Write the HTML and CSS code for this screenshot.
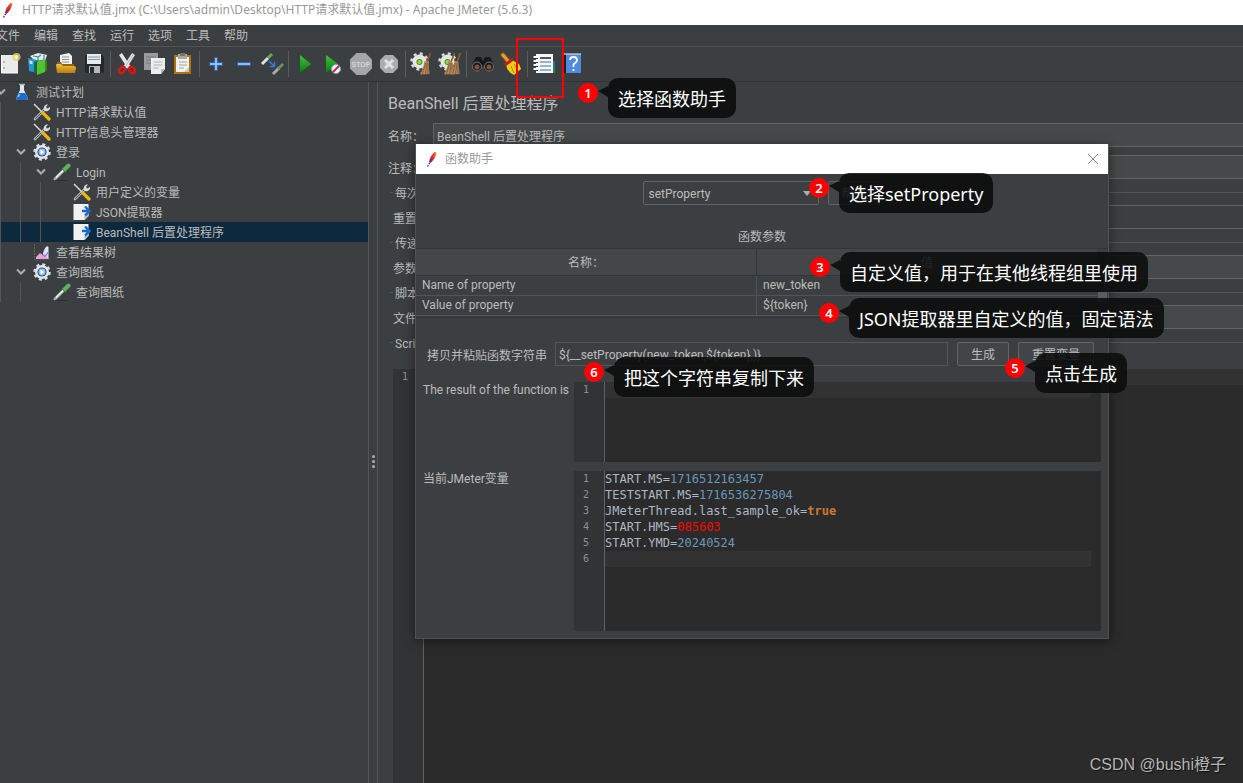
FILE: index.html
```html
<!DOCTYPE html>
<html lang="zh-CN">
<head>
<meta charset="utf-8">
<title>Apache JMeter (5.6.3)</title>
<link rel="stylesheet" href="styles.css">
</head>
<body>
<svg class="defs" aria-hidden="true">
  <defs>
    <linearGradient id="gFeather" x1="0" y1="1" x2="1" y2="0"><stop offset="0" stop-color="#5b2a86"/><stop offset=".45" stop-color="#d0213a"/><stop offset="1" stop-color="#f08a1d"/></linearGradient>
    <linearGradient id="gGreen" x1="0" y1="0" x2="0" y2="1"><stop offset="0" stop-color="#3fc43a"/><stop offset="1" stop-color="#0a7a0a"/></linearGradient>
    <linearGradient id="gFolder" x1="0" y1="0" x2="0" y2="1"><stop offset="0" stop-color="#f0c040"/><stop offset="1" stop-color="#b97d08"/></linearGradient>
    <symbol id="feather" viewBox="0 0 16 18">
      <path d="M5 12C5.500 9 7.500 4.500 10.500 2l2 .5C12 6 9.500 10.500 6.500 13z" fill="url(#gFeather)"/>
      <path d="M3.500 16.500l3-5" stroke="#5b2a86" stroke-width="1.400" stroke-dasharray="1.500 1.200"/>
    </symbol>
    <symbol id="tools" viewBox="0 0 18 18">
      <path d="M2 16L12 6" stroke="#aeb0b2" stroke-width="2.800" stroke-linecap="round"/>
      <path d="M2.200 15.800L12 6" stroke="#50565a" stroke-width="1"/>
      <path d="M11 7c-1-3 1-6 4-5.500L13 4l1 1.500 3-1.500c.5 3-2.500 5-5 4z" fill="#d6d8da"/>
      <path d="M1 1l9 9" stroke="#d6d8da" stroke-width="1.500"/>
      <path d="M10 10l6 6" stroke="#efb413" stroke-width="3.200" stroke-linecap="round"/>
    </symbol>
    <symbol id="gear" viewBox="0 0 18 18">
      <circle cx="9" cy="9" r="7.500" fill="none" stroke="#d9dde2" stroke-width="2.500" stroke-dasharray="3 2.890"/>
      <circle cx="9" cy="9" r="7" fill="#e3e7ec"/>
      <circle cx="9" cy="9" r="4.600" fill="#315b93"/>
      <circle cx="9" cy="9" r="3.400" fill="#9bbbe0"/>
      <path d="M7.500 6.500l4 2.500-4 2.500z" fill="#fff"/>
    </symbol>
    <symbol id="pipette" viewBox="0 0 18 18">
      <path d="M2 16L11 7" stroke="#a9adaf" stroke-width="3" stroke-linecap="round"/>
      <path d="M3 14.500L10.500 7" stroke="#f4f4f4" stroke-width="1.300"/>
      <path d="M9 5l4 4" stroke="#3f7d3f" stroke-width="2"/>
      <path d="M12 6l3.500-3.500" stroke="#63ad5e" stroke-width="4" stroke-linecap="round"/>
      <path d="M2 17.500h13" stroke="#2d3031" stroke-width="1"/>
    </symbol>
    <symbol id="pageArrow" viewBox="0 0 18 18">
      <path d="M.5 1h15v12l-4 4H.5z" fill="#f0f1f1"/><path d="M15.500 10v3l-4 4v-4z" fill="#b7baba"/>
      <path d="M9 8h7M12 3.500L16.500 8 12 12.500" fill="none" stroke="#1769d2" stroke-width="2.400"/>
    </symbol>
    <symbol id="flask" viewBox="0 0 18 18">
      <path d="M7 2h4v5l4 8.500q.3 1.500-1.500 1.500h-9Q2.700 17 3 15.500L7 7z" fill="#dce8f3"/>
      <path d="M5.700 10h6.600l2.700 5.500q.3 1.500-1.500 1.500h-9Q2.700 17 3 15.500z" fill="#1c6fc9"/><path d="M6 1.500h6" stroke="#a8b6c2" stroke-width="1.500"/><path d="M5 14l1.500-3" stroke="#8fc1f2" stroke-width="1.500"/>
    </symbol>
    <symbol id="chart" viewBox="0 0 18 18">
      <path d="M1.500 1v16H17" fill="none" stroke="#5c6265" stroke-dasharray="2 1"/>
      <path d="M10 10q3-9 5.500-6V16h-6z" fill="#dfe6fa"/><path d="M3 16v-2l4-4 3 2 2-2 3 6z" fill="#ea9fd6"/><path d="M9.500 11q2 4 4 1l1.500-3" fill="none" stroke="#4b73c8"/>
    </symbol>
    <symbol id="chev" viewBox="0 0 10 8"><path d="M1 1.500l4 4 4-4" fill="none" stroke="#adadad" stroke-width="2"/></symbol>
    <symbol id="gearSmall" viewBox="0 0 24 24">
      <circle cx="9.500" cy="9.500" r="8" fill="none" stroke="#d8dad6" stroke-width="2.500" stroke-dasharray="3 3.280"/><circle cx="9.500" cy="9.500" r="7" fill="#e6e7e3"/><circle cx="9.500" cy="10" r="3" fill="#4f8f25"/><circle cx="9.500" cy="10" r="2" fill="#8ed64a"/>
    </symbol>
    <symbol id="besom" viewBox="0 0 24 24">
      <path d="M20.500 1L17 10" stroke="#8b5e30" stroke-width="1.600"/><path d="M14.500 9l4 1 1 12-9 .5q-1-1 1-3 2-4 3-10.500z" fill="#b58a5c"/>
      <path d="M15.500 11l-3 11M17 11l-1.500 11M18 11v11" stroke="#7d5630" stroke-width=".8"/>
    </symbol>
  </defs>
</svg>

<div class="app">
  <header class="titlebar">
    <svg class="feather"><use href="#feather"/></svg>
    <span>HTTP请求默认值.jmx (C:\Users\admin\Desktop\HTTP请求默认值.jmx) - Apache JMeter (5.6.3)</span>
  </header>

  <nav class="menubar">
    <button>文件</button><button>编辑</button><button>查找</button><button>运行</button><button>选项</button><button>工具</button><button>帮助</button>
  </nav>

  <div class="toolbar">
    <button aria-label="新建"><svg viewBox="0 0 24 24"><path d="M3 3h17v18H3z" fill="#e9eaea"/><path d="M3.500 3v18H20" fill="none" stroke="#fff"/><path d="M6 9v2M6 15v2" stroke="#8a8d8f"/><circle cx="18.500" cy="5" r="4" fill="#e8d46a" opacity=".8"/><circle cx="18.500" cy="5" r="1.800" fill="#fffbd0"/></svg></button>
    <button aria-label="模板"><svg viewBox="0 0 24 24"><path d="M4 4l8-3 9 2-2 6-9 1z" fill="#dfeee8"/><path d="M7 4l5 1v4l6-1V3M12 5l3-2" fill="none" stroke="#3d8e85" stroke-width="1.200"/><path d="M2 6l9 2v13l-8-2z" fill="#2b93d0"/><path d="M3.500 8.500l3 .8v3l-3-.8z" fill="#c4e8fa"/><path d="M8 10l4-1.500V22l-4-2z" fill="#146b3c"/><path d="M11 10l8-2v12l-8 3z" fill="#54c22f"/><path d="M19 8l2 1v9l-2 2z" fill="#2e8b19"/></svg></button>
    <button aria-label="打开"><svg viewBox="0 0 24 24"><path d="M6 3l9-2 3 3v9H6z" fill="#f2f2f0"/><path d="M8 5h7M8 7.500h7M8 10h7" stroke="#909497"/><path d="M3 10h4l1 2h12l1 9H3z" fill="#96630a"/><path d="M2 13q0-1 1-1h4l2 2h11q2 0 2 2l-1 5H3z" fill="url(#gFolder)"/></svg></button>
    <button aria-label="保存"><svg viewBox="0 0 24 24"><path d="M3 3h17l2 2v16H4l-1-1z" fill="#23282c"/><path d="M5 2h14v10H5z" fill="#e5ebef"/><path d="M6 5h12M6 7.500h12" stroke="#7c9ab0"/><path d="M7 14h11v7H7z" fill="#b4b8bb"/><path d="M8 15h4v6H8z" fill="#282c30"/></svg></button>
    <span class="sep"></span>
    <button aria-label="剪切"><svg viewBox="0 0 24 24"><path d="M5.500 2l9 14M18.500 2l-9 14" stroke="#e6e6e6" stroke-width="3.500"/><path d="M18.500 2l-9 14" stroke="#b2b2b2" stroke-width="1"/><ellipse cx="7" cy="18" rx="2.500" ry="3.500" transform="rotate(35 7 18)" fill="none" stroke="#d91515" stroke-width="2.500"/><ellipse cx="17" cy="18" rx="2.500" ry="3.500" transform="rotate(-35 17 18)" fill="none" stroke="#d91515" stroke-width="2.500"/></svg></button>
    <button aria-label="复制"><svg viewBox="0 0 24 24"><path d="M1 1h14v17H1z" fill="#989b9c"/><path d="M3 5h10M3 8h6M3 11h5" stroke="#777b7d"/><path d="M8 6h14v11l-4 5H8z" fill="#eceded"/><path d="M18 22v-5h4z" fill="#b4b6b8"/><path d="M10.500 10h9M10.500 13h9M10.500 16h5" stroke="#aeb2b4"/></svg></button>
    <button aria-label="粘贴"><svg viewBox="0 0 24 24"><path d="M3 3h17v19H3z" fill="#ae7211"/><path d="M5 5h13v15H5z" fill="#f1f1ee"/><path d="M7 2h9v5H7z" fill="#a6a9a6"/><path d="M9 1h5v3H9z" fill="#72776b"/><path d="M8 10h8M8 13h8M8 16h5" stroke="#a1a5a7"/><path d="M18 15v5h-5z" fill="#c5c7c8"/></svg></button>
    <span class="sep"></span>
    <button aria-label="展开"><svg viewBox="0 0 24 24"><path d="M12 5v14M5 12h14" stroke="#2e62b4" stroke-width="4"/><path d="M12 6v12M6 12h12" stroke="#91bcf2" stroke-width="2"/></svg></button>
    <button aria-label="折叠"><svg viewBox="0 0 24 24"><path d="M5 12h14" stroke="#2e62b4" stroke-width="4"/><path d="M6 12h12" stroke="#91bcf2" stroke-width="2"/></svg></button>
    <button aria-label="切换"><svg viewBox="0 0 24 24"><path d="M2 12l6-6" stroke="#dfe2df" stroke-width="3"/><path d="M8 6l4-4" stroke="#64a75e" stroke-width="3"/><path d="M13 22l6-6" stroke="#a6aaa6" stroke-width="3"/><path d="M18 17l5-5" stroke="#6d8d68" stroke-width="3"/><path d="M9 9l5 5M14.500 10v4.500H10" fill="none" stroke="#2f7de0" stroke-width="1.500"/></svg></button>
    <span class="sep"></span>
    <button aria-label="启动"><svg viewBox="0 0 24 24"><path d="M7 3l11 9-11 9z" fill="url(#gGreen)"/></svg></button>
    <button aria-label="不停顿开始"><svg viewBox="0 0 24 24"><path d="M5 3l12 9-12 9z" fill="url(#gGreen)"/><circle cx="15" cy="17" r="4.500" fill="#e8eefa" stroke="#7ba0cf"/><path d="M12 20l6-6" stroke="#cf2626" stroke-width="2"/></svg></button>
    <button aria-label="停止"><svg viewBox="0 0 24 24"><path d="M7.500 1h9L23 7.500v9L16.500 23h-9L1 16.500v-9z" fill="#a5a6a7"/><text x="12" y="15" text-anchor="middle" class="stop">STOP</text></svg></button>
    <button aria-label="关闭"><svg viewBox="0 0 24 24"><path d="M8 3h8l5 5v8l-5 5H8l-5-5V8z" fill="#abacad"/><path d="M8 8l8 8M16 8l-8 8" stroke="#e2e2e2" stroke-width="3"/></svg></button>
    <span class="sep"></span>
    <button aria-label="清除"><svg viewBox="0 0 24 24"><use href="#gearSmall"/><use href="#besom"/></svg></button>
    <button aria-label="清除全部"><svg viewBox="0 0 24 24"><use href="#gearSmall"/><use href="#besom" x="-4"/><use href="#besom" x="2"/></svg></button>
    <span class="sep"></span>
    <button aria-label="搜索"><svg viewBox="0 0 24 24"><path d="M5 5h5l2 4 2-4h5l4 8-3 6h-5l-3-6-3 6H4l-3-6z" fill="#16191b"/><circle cx="6" cy="14.500" r="4.500" fill="#17191b" stroke="#777"/><circle cx="18" cy="14.500" r="4.500" fill="#17191b" stroke="#777"/><circle cx="6" cy="15" r="2.500" fill="#855239"/><circle cx="18" cy="15" r="2.500" fill="#855239"/></svg></button>
    <button aria-label="重置搜索"><svg viewBox="0 0 24 24"><path d="M4 3l5 6" stroke="#9a5210" stroke-width="5" stroke-linecap="round"/><path d="M4 3l5 6" stroke="#dda02d" stroke-width="3" stroke-linecap="round"/><path d="M13 8l7 4 2 5-7 6q-7-3-8-10z" fill="#f1ce16"/><path d="M12 14l3 7M15 12l4 7" stroke="#b28408"/><path d="M6 13l8-6" stroke="#c71d14" stroke-width="3"/></svg></button>
    <span class="sep"></span>
    <button aria-label="函数助手"><svg viewBox="0 0 24 24"><path d="M19 9h4v12h-4z" fill="#1b8f28"/><path d="M19 9h4v6h-4z" fill="#1670d0"/><path d="M4 2h17v19H4z" fill="#f7f7f7"/><path d="M8 6h11" stroke="#222" stroke-width="1.500"/><path d="M8 10h11M8 14h11M8 18h11" stroke="#3670a8" stroke-width="1.200"/><path d="M1.500 5h5M1.500 9h5M1.500 13h5M1.500 17h5" stroke="#fff" stroke-width="2"/><path d="M4 6.500h2M4 10.500h2M4 14.500h2M4 18.500h2" stroke="#333"/></svg></button>
    <button aria-label="帮助"><svg viewBox="0 0 24 24"><path d="M3 3h4v18H3z" fill="#1d2025"/><path d="M6 2h15v19H6z" fill="#4f8bdc"/><path d="M4 2h17" stroke="#eee"/><path d="M10 8q0-3 3.500-3T17 8q0 2-2 3t-1.500 4M13.500 17v2" fill="none" stroke="#fff" stroke-width="1.800"/></svg></button>
  </div>

  <main class="workspace">
    <ul class="tree">
      <li><i><svg class="chev"><use href="#chev"/></svg></i><svg class="ico"><use href="#flask"/></svg><span>测试计划</span></li>
      <li><i class="guide"></i><i></i><svg class="ico"><use href="#tools"/></svg><span>HTTP请求默认值</span></li>
      <li><i class="guide"></i><i></i><svg class="ico"><use href="#tools"/></svg><span>HTTP信息头管理器</span></li>
      <li><i class="guide"></i><i><svg class="chev"><use href="#chev"/></svg></i><svg class="ico"><use href="#gear"/></svg><span>登录</span></li>
      <li><i class="guide"></i><i class="guide"></i><i><svg class="chev"><use href="#chev"/></svg></i><svg class="ico"><use href="#pipette"/></svg><span>Login</span></li>
      <li><i class="guide"></i><i class="guide"></i><i class="guide"></i><i></i><svg class="ico"><use href="#tools"/></svg><span>用户定义的变量</span></li>
      <li><i class="guide"></i><i class="guide"></i><i class="guide"></i><i></i><svg class="ico"><use href="#pageArrow"/></svg><span>JSON提取器</span></li>
      <li class="selected"><i class="guide"></i><i class="guide"></i><i class="guide"></i><i></i><svg class="ico"><use href="#pageArrow"/></svg><span>BeanShell 后置处理程序</span></li>
      <li><i class="guide"></i><i></i><svg class="ico"><use href="#chart"/></svg><span>查看结果树</span></li>
      <li><i class="guide"></i><i><svg class="chev"><use href="#chev"/></svg></i><svg class="ico"><use href="#gear"/></svg><span>查询图纸</span></li>
      <li><i class="guide"></i><i class="guide"></i><i></i><svg class="ico"><use href="#pipette"/></svg><span>查询图纸</span></li>
    </ul>
    <div class="splitter"><b></b><b></b><b></b></div>
    <section class="panel">
      <h1>BeanShell 后置处理程序</h1>
      <div class="field"><label for="nm">名称：</label><input id="nm" value="BeanShell 后置处理程序"></div>
      <div class="field"><label for="cm">注释：</label><input id="cm"></div>
      <div class="legend"><span>每次</span></div>
      <div class="field inner"><label for="f1">重置</label><select id="f1"></select></div>
      <div class="legend"><span>传递</span></div>
      <div class="field inner"><label for="f2">参数</label><input id="f2"></div>
      <div class="legend"><span>脚本</span></div>
      <div class="field inner"><label for="f3">文件</label><input id="f3"></div>
      <div class="legend"><span>Script</span></div>
      <div class="editor main-editor"><div class="gutter">1</div><div class="code"><div class="current"></div></div></div>
    </section>
  </main>

  <section class="dialog" aria-label="函数助手">
    <header><svg class="feather"><use href="#feather"/></svg><span>函数助手</span>
      <button aria-label="关闭"><svg viewBox="0 0 12 12"><path d="M1 1l10 10M11 1L1 11" stroke="#888" fill="none"/></svg></button></header>
    <div class="picker">
      <span class="combo"><select aria-label="函数"><option>setProperty</option></select></span>
      <button class="btn">帮助</button>
    </div>
    <h2>函数参数</h2>
    <div class="params">
      <table>
        <thead><tr><th>名称：</th><th>值</th></tr></thead>
        <tbody><tr><td>Name of property</td><td>new_token</td></tr><tr><td>Value of property</td><td>${token}</td></tr></tbody>
      </table>
      <div class="scroll"><span></span></div>
    </div>
    <div class="copyrow">
      <label for="fn">拷贝并粘贴函数字符串</label><input id="fn" value="${__setProperty(new_token,${token},)}">
      <button class="btn">生成</button><button class="btn wide">重置变量</button>
    </div>
    <div class="result">
      <span>The result of the function is</span>
      <div class="editor small"><div class="gutter">1</div><div class="code"><div class="current"></div></div></div>
      <span>当前JMeter变量</span>
      <div class="editor large">
        <div class="gutter">1<br>2<br>3<br>4<br>5<br>6</div>
        <div class="code">
          <div>START.MS=<span class="num">1716512163457</span></div>
          <div>TESTSTART.MS=<span class="num">1716536275804</span></div>
          <div>JMeterThread.last_sample_ok=<span class="kw">true</span></div>
          <div>START.HMS=<span class="err">085603</span></div>
          <div>START.YMD=<span class="num">20240524</span></div>
          <div class="current"></div>
        </div>
      </div>
    </div>
  </section>

  <div class="highlight"></div>
  <div class="note n1"><b>1</b><p>选择函数助手</p></div>
  <div class="note n2"><b>2</b><p>选择setProperty</p></div>
  <div class="note n3"><b>3</b><p>自定义值，用于在其他线程组里使用</p></div>
  <div class="note n4"><b>4</b><p>JSON提取器里自定义的值，固定语法</p></div>
  <div class="note n5"><b>5</b><p>点击生成</p></div>
  <div class="note n6"><b>6</b><p>把这个字符串复制下来</p></div>
  <div class="watermark">CSDN @bushi橙子</div>
</div>
</body>
</html>
```

FILE: styles.css
```css
* { box-sizing: border-box; }
body {
  margin: 0;
  background: #3c3f41;
  color: #bbb;
  font: 12px/20px Roboto, "Noto Sans CJK SC", sans-serif;
}
button, input, select { font: inherit; color: inherit; margin: 0; }
h1, h2, p, ul { margin: 0; padding: 0; font-weight: 400; }
.defs { position: absolute; width: 0; height: 0; }
.app { position: relative; display: flex; flex-direction: column; height: 100vh; overflow: hidden; }

.titlebar { display: flex; align-items: center; height: 25px; padding-bottom: 5px; background: #fff; color: #999; white-space: nowrap; font-family: "Noto Sans", "Noto Sans CJK SC", sans-serif; }
.feather { width: 16px; height: 18px; flex: none; }
.titlebar .feather { margin-right: 6px; }

.menubar { display: flex; height: 22px; margin-left: -11px; border-bottom: 1px solid #515151; }
.menubar button { width: 38px; padding: 1px 0 0; border: 0; background: none; white-space: nowrap; }

.toolbar { display: flex; align-items: center; height: 35px; padding-bottom: 1px; margin-left: -4px; border-bottom: 1px solid #323232; }
.toolbar button { flex: none; width: 28px; height: 28px; padding: 2px; border: 0; background: none; }
.toolbar svg { display: block; width: 24px; height: 24px; fill: none; }
.toolbar .sep { flex: none; width: 5px; height: 26px; background: linear-gradient(#5a5c5d, #5a5c5d) center / 1px 100% no-repeat; }
.stop { font: bold 7px "Liberation Sans", sans-serif; fill: #d5d5d5; }

.workspace { flex: 1; display: flex; min-height: 0; }
.tree { flex: none; width: 369px; border-right: 1px solid #555; list-style: none; overflow: hidden; }
.tree li { display: flex; align-items: center; height: 20px; white-space: nowrap; }
.tree li span { padding-top: 2px; }
.tree i { flex: none; display: flex; justify-content: center; width: 20px; height: 20px; align-items: center; }
.tree i:first-child { margin-left: -9px; }
.tree .guide { background: linear-gradient(#555, #555) 9px 0 / 1px 100% no-repeat; }
.tree .selected { background: #0d293e; }
.chev { width: 10px; height: 8px; }
.ico { flex: none; width: 18px; height: 18px; margin: 0 5px 0 2px; }
.splitter { flex: none; display: flex; flex-direction: column; align-items: center; justify-content: center; gap: 2px; width: 9px; padding-top: 58px; border-right: 1px solid #555; }
.splitter b { width: 3px; height: 3px; border-radius: 50%; background: #adadad; }

.panel { flex: 1; min-width: 0; display: flex; flex-direction: column; padding: 10px 0 0 10px; }
.panel h1 { margin-bottom: 7px; font-size: 16px; line-height: 24px; }
.field { display: flex; align-items: center; height: 24px; }
.field + .field { margin-top: 8px; }
.field label { flex: none; width: 45px; padding-top: 3px; white-space: nowrap; }
.field.inner { padding-left: 5px; }
.field.inner label { width: 40px; }
.field input, .field select { flex: 1; min-width: 0; height: 24px; padding: 1px 3px 0; border: 1px solid #646464; border-right: 0; border-radius: 0; background: #45494a; appearance: none; }
.field select { background: #3c3f41; }
.legend { display: flex; align-items: center; gap: 2px; height: 26px; padding-left: 2px; }
.legend span { padding-top: 3px; }
.legend::before, .legend::after { content: ""; height: 1px; background: #555; }
.legend::before { width: 3px; }
.legend::after { flex: 1; }

.editor { display: flex; background: #2b2b2b; font: 12px/16px "DejaVu Sans Mono", monospace; color: #a9b7c6; }
.gutter { flex: none; width: 31px; padding-right: 15px; border-right: 1px solid #606060; background: #313335; color: #909090; font-size: 10px; text-align: right; }
.code { flex: 1; min-width: 0; padding-right: 10px; white-space: nowrap; }
.current { height: 16px; background: #323232; }
.num { color: #6897bb; }
.kw { color: #cc7832; font-weight: 700; }
.err { color: #f00; }
.main-editor { flex: 1; margin: 14px 0 0 5px; }
.main-editor .code { padding-right: 0; }

.dialog { position: absolute; left: 415px; top: 144px; width: 694px; border: solid #515151; border-width: 0 1px 1px; background: #3c3f41; box-shadow: 0 2px 10px rgba(0, 0, 0, .5); }
.dialog header { display: flex; align-items: center; height: 30px; padding: 0 8px; background: #fff; color: #999; }
.dialog header span { flex: 1; margin-left: 5px; }
.dialog header button { width: 14px; height: 14px; padding: 1px; border: 0; background: none; }
.dialog header button svg { display: block; width: 12px; height: 12px; }
.picker { display: flex; justify-content: center; gap: 9px; padding: 7px 2px 0 0; }
.combo { position: relative; width: 176px; }
.combo select { display: block; width: 100%; height: 24px; padding: 2px 5px 0; border: 1px solid #646464; border-radius: 2px; background: #3c3f41; appearance: none; }
.combo::after { content: ""; position: absolute; right: 8px; top: 10px; border: solid transparent; border-width: 5px 4px 0; border-top-color: #adadad; }
.btn { width: 52px; height: 24px; padding: 2px 0 0; border: 1px solid #646464; border-radius: 2px; background: #414547; line-height: 20px; white-space: nowrap; }
.btn.wide { width: 76px; }
.dialog h2 { padding-top: 22px; margin-bottom: 1px; font-size: 12px; line-height: 20px; text-align: center; }
.params { display: flex; height: 70px; border: solid #323436; border-width: 1px 0; }
.params table { flex: 1; width: 100%; border-collapse: collapse; table-layout: fixed; height: 66px; }
.params th { width: 50%; height: 26px; padding: 3px 0 0; border-right: 1px solid #323436; border-bottom: 1px solid #323436; background: #444749; font-weight: 400; }
.params td { height: 20px; padding: 0 6px; line-height: 18px; border-right: 1px solid #515355; border-bottom: 1px solid #515355; }
.params th:last-child, .params td:last-child { border-right: 0; }
.scroll { flex: none; width: 11px; padding: 43px 1px 0; }
.scroll span { display: block; height: 11px; background: #595b5c; }
.copyrow { display: flex; gap: 9px; padding: 24px 14px 16px 11px; }
.copyrow label { flex: none; width: 119px; padding-top: 2px; line-height: 24px; height: 24px; white-space: nowrap; }
.copyrow input { flex: 1; min-width: 0; height: 24px; padding: 1px 3px 0; border: 1px solid #555; background: #3c3f41; }
.result { display: grid; grid-template-columns: 151px 1fr; row-gap: 9px; padding: 0 7px 7px; line-height: 16px; white-space: nowrap; }
.small { height: 80px; }
.large { height: 160px; }

.highlight { position: absolute; left: 516px; top: 38px; width: 48px; height: 60px; border: 2px solid #f00; }
.note { position: absolute; display: flex; align-items: flex-start; gap: 10px; color: #fff; font: 18px/40px "Noto Sans", "Noto Sans CJK SC", sans-serif; white-space: nowrap; }
.note b { width: 20px; height: 20px; margin-top: 5px; border-radius: 50%; background: #f00; font-size: 13px; font-weight: 600; line-height: 20px; text-align: center; }
.note p { position: relative; height: 40px; padding: 0 10px; border-radius: 10px; background: rgba(10, 12, 12, .87); line-height: 42px; }
.note p::before { content: ""; position: absolute; left: -10px; top: 8px; border: solid transparent; border-width: 5px 10px 6px 0; border-right-color: rgba(10, 12, 12, .87); }
.n1 { left: 578px; top: 78px; }
.n2 { left: 809px; top: 173px; }
.n3 { left: 810px; top: 252px; }
.n4 { left: 819px; top: 298px; }
.n5 { left: 1005px; top: 353px; }
.n6 { left: 584px; top: 357px; }
.watermark { position: absolute; right: 17px; bottom: 6px; color: #b5b5b5; font: 16px/24px "Liberation Sans", "Noto Sans CJK SC", sans-serif; text-shadow: 1px 1px 1px #111; }
```
